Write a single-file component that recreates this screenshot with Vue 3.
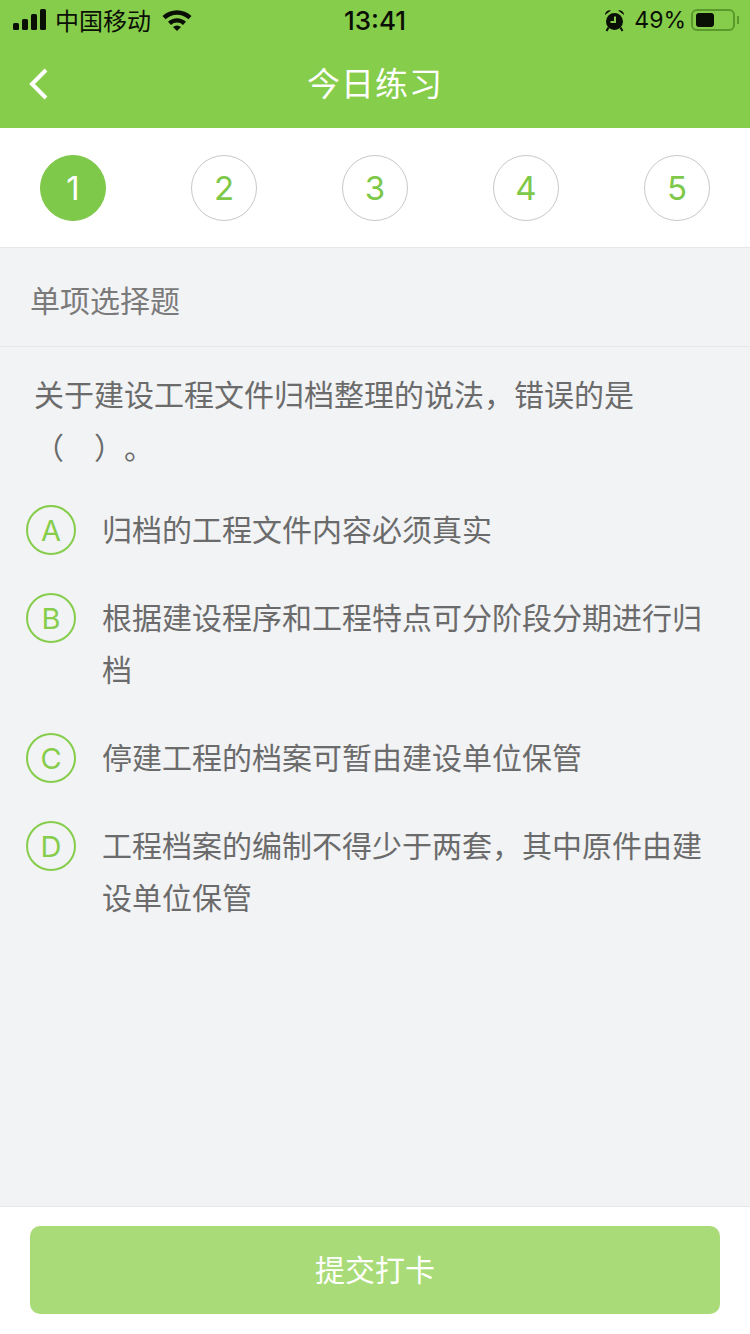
<script setup>
const steps = [1, 2, 3, 4, 5]
const current = 1

const options = [
  { key: 'A', text: '归档的工程文件内容必须真实' },
  { key: 'B', text: '根据建设程序和工程特点可分阶段分期进行归档' },
  { key: 'C', text: '停建工程的档案可暂由建设单位保管' },
  { key: 'D', text: '工程档案的编制不得少于两套\uff0c其中原件由建设单位保管' },
]
</script>

<template>
  <div class="page">
    <header class="header">
      <div class="status-bar">
        <div class="status-left">
          <svg class="signal" width="34" height="22" viewBox="0 0 34 22">
            <rect x="0" y="14" width="6" height="7" rx="1.500" />
            <rect x="9" y="10" width="6" height="11" rx="1.500" />
            <rect x="18" y="5" width="6" height="16" rx="1.500" />
            <rect x="27" y="0" width="6" height="21" rx="1.500" />
          </svg>
          <span class="carrier">中国移动</span>
          <svg class="wifi" width="30" height="22" viewBox="0 0 30 22">
            <path d="M0.500 7 A21 21 0 0 1 29.500 7 L26.500 10.300 A16.500 16.500 0 0 0 3.500 10.300 Z" />
            <path d="M6 12.800 A13 13 0 0 1 24 12.800 L21 16 A8.500 8.500 0 0 0 9 16 Z" />
            <path d="M11 18 A5.800 5.800 0 0 1 19 18 L15 22 Z" />
          </svg>
        </div>
        <span class="time">13:41</span>
        <div class="status-right">
          <svg class="alarm" width="21" height="23" viewBox="0 0 21 23">
            <circle cx="10.500" cy="12.500" r="8.500" />
            <path d="M1 6 A4.500 4.500 0 0 1 7 1.500 Z M14 1.500 A4.500 4.500 0 0 1 20 6 Z" />
            <path class="alarm-legs" d="M4.500 18.500 L2.500 22 M16.500 18.500 L18.500 22" />
            <path class="alarm-hand" d="M11 7.500 V13 H6.500" />
          </svg>
          <span class="percent">49%</span>
          <div class="battery">
            <div class="battery-level"></div>
          </div>
          <div class="battery-cap"></div>
        </div>
      </div>
      <div class="nav-bar">
        <svg class="back" width="24" height="32" viewBox="0 0 24 32">
          <path d="M18 2 L4 16 L18 30" />
        </svg>
        <h1 class="title">今日练习</h1>
      </div>
    </header>

    <div class="steps">
      <div
        v-for="step in steps"
        :key="step"
        class="step"
        :class="{ active: step === current }"
      >
        {{ step }}
      </div>
    </div>

    <div class="type-row">单项选择题</div>

    <main class="question">
      <p class="stem">关于建设工程文件归档整理的说法&#xff0c;错误的是<br />&#xff08;&#x3000;&#xff09;&#x3002;</p>
      <div v-for="option in options" :key="option.key" class="option">
        <span class="option-key">{{ option.key }}</span>
        <span class="option-text">{{ option.text }}</span>
      </div>
    </main>

    <footer class="footer">
      <button class="submit">提交打卡</button>
    </footer>
  </div>
</template>

<style>
html,
body {
  margin: 0;
  background: #f2f3f5;
}
</style>

<style scoped>
.page {
  display: flex;
  flex-direction: column;
  width: 750px;
  height: 1334px;
  background: #f2f3f5;
  font-family: "Noto Sans CJK SC", "Liberation Sans", sans-serif;
  overflow: hidden;
}

.header {
  height: 128px;
  background: #86cd4b;
}

.status-bar {
  display: flex;
  align-items: center;
  justify-content: space-between;
  height: 40px;
  padding: 0 11px 0 13px;
  color: #0a0f05;
  position: relative;
}

.status-left,
.status-right {
  display: flex;
  align-items: center;
}

.signal {
  fill: #0a0f05;
}

.carrier {
  margin-left: 8px;
  font-size: 24px;
  line-height: 40px;
}

.wifi {
  margin-left: 11px;
  fill: #0a0f05;
}

.time {
  position: absolute;
  left: 0;
  right: 0;
  text-align: center;
  font-family: Inter, "Liberation Sans", sans-serif;
  font-size: 26px;
  font-weight: 500;
}

.alarm {
  margin-right: 9px;
}

.alarm circle,
.alarm > path:nth-of-type(1) {
  fill: #0a0f05;
}

.alarm-legs {
  fill: none;
  stroke: #0a0f05;
  stroke-width: 2;
}

.alarm-hand {
  fill: none;
  stroke: #86cd4b;
  stroke-width: 2;
}

.percent {
  font-family: Inter, "Liberation Sans", sans-serif;
  font-size: 23px;
  font-weight: 400;
}

.battery {
  box-sizing: border-box;
  width: 44px;
  height: 22px;
  margin-left: 5px;
  padding: 2px 3px;
  border: 2px solid #5a9a2c;
  border-radius: 6px;
}

.battery-level {
  width: 18px;
  height: 100%;
  background: #0a0f05;
  border-radius: 3px;
}

.battery-cap {
  width: 2px;
  height: 8px;
  margin-left: 2px;
  background: #5a9a2c;
}

.nav-bar {
  display: flex;
  align-items: center;
  justify-content: center;
  box-sizing: border-box;
  height: 88px;
  padding-bottom: 4px;
  position: relative;
}

.back {
  position: absolute;
  left: 28px;
  top: 28px;
  fill: none;
  stroke: #fff;
  stroke-width: 4;
}

.title {
  margin: 0;
  font-size: 33px;
  font-weight: 400;
  color: #fff;
  letter-spacing: 1px;
}

.steps {
  display: flex;
  justify-content: space-between;
  align-items: center;
  box-sizing: border-box;
  height: 120px;
  padding: 0 40px;
  background: #fff;
  border-bottom: 1px solid #e6e6e6;
}

.step {
  display: flex;
  align-items: center;
  justify-content: center;
  box-sizing: border-box;
  width: 66px;
  height: 66px;
  border: 1px solid #c8c8c8;
  border-radius: 50%;
  color: #7ec84a;
  font-family: Inter, "Liberation Sans", sans-serif;
  font-size: 33px;
  font-weight: 400;
}

.step.active {
  background: #7ec84a;
  border-color: #7ec84a;
  color: #fff;
}

.type-row {
  display: flex;
  align-items: center;
  box-sizing: border-box;
  height: 99px;
  padding: 4px 30px 0;
  border-bottom: 1px solid #e6e7e9;
  color: #7a7a7a;
  font-size: 30px;
}

.question {
  flex: 1;
  padding: 20px 30px 0 26px;
}

.stem {
  margin: 0 0 29px 8px;
  color: #6b6b6b;
  font-size: 30px;
  line-height: 53px;
  text-spacing-trim: space-all;
}

.option {
  display: flex;
  align-items: flex-start;
  margin-bottom: 36px;
}

.option-key {
  display: flex;
  align-items: center;
  justify-content: center;
  flex-shrink: 0;
  box-sizing: border-box;
  width: 50px;
  height: 50px;
  margin: 3px 26px -3px 0;
  border: 2px solid #86cd4b;
  border-radius: 50%;
  color: #86cd4b;
  font-family: Inter, "Liberation Sans", sans-serif;
  font-size: 29px;
  font-weight: 400;
}

.option-text {
  color: #6b6b6b;
  font-size: 30px;
  line-height: 52px;
}

.footer {
  box-sizing: border-box;
  height: 128px;
  padding: 19px 30px;
  background: #fff;
  border-top: 1px solid #e6e7e9;
}

.submit {
  display: block;
  width: 100%;
  height: 88px;
  padding: 0 0 5px;
  border: none;
  border-radius: 10px;
  background: #a9dc78;
  color: #fff;
  font-family: "Noto Sans CJK SC", "Liberation Sans", sans-serif;
  font-size: 30px;
}
</style>
